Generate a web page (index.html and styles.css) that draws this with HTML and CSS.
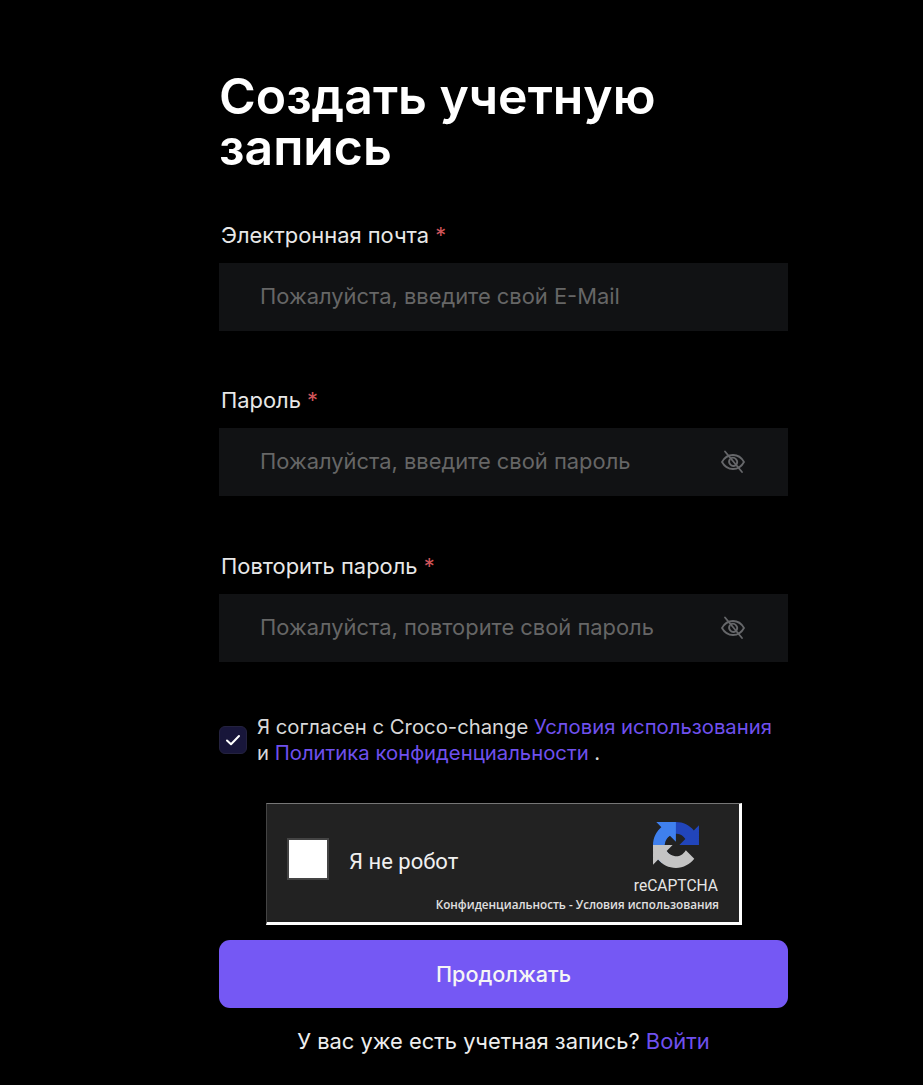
FILE: index.html
```html
<!DOCTYPE html>
<html lang="ru">
<head>
<meta charset="utf-8">
<title>Создать учетную запись</title>
<link rel="stylesheet" href="styles.css">
</head>
<body>
<main class="form">
  <h1 class="title">Создать учетную запись</h1>

  <div class="field field-first">
    <label class="label">Электронная почта <span class="req">*</span></label>
    <div class="input"><span class="placeholder">Пожалуйста, введите свой E-Mail</span></div>
  </div>

  <div class="field">
    <label class="label">Пароль <span class="req">*</span></label>
    <div class="input">
      <span class="placeholder">Пожалуйста, введите свой пароль</span>
      <svg class="eye" viewBox="0 0 24 24" fill="none" stroke="#66676a" stroke-width="1.8" stroke-linecap="round" stroke-linejoin="round"><path d="M1 12C3.500 7.500 7.300 5 12 5S20.500 7.500 23 12C20.500 16.500 16.700 19 12 19S3.500 16.500 1 12Z"/><path d="M8.700 9.500a4.300 4.300 0 0 0 5.800 5.900"/><path d="M9.800 8.300a4.300 4.300 0 0 1 5.800 5.900"/><path d="M4 1.500L21 22"/></svg>
    </div>
  </div>

  <div class="field field-third">
    <label class="label">Повторить пароль <span class="req">*</span></label>
    <div class="input">
      <span class="placeholder">Пожалуйста, повторите свой пароль</span>
      <svg class="eye" viewBox="0 0 24 24" fill="none" stroke="#66676a" stroke-width="1.8" stroke-linecap="round" stroke-linejoin="round"><path d="M1 12C3.500 7.500 7.300 5 12 5S20.500 7.500 23 12C20.500 16.500 16.700 19 12 19S3.500 16.500 1 12Z"/><path d="M8.700 9.500a4.300 4.300 0 0 0 5.800 5.900"/><path d="M9.800 8.300a4.300 4.300 0 0 1 5.800 5.900"/><path d="M4 1.500L21 22"/></svg>
    </div>
  </div>

  <div class="agree">
    <span class="check">
      <svg viewBox="0 0 16 16" width="16" height="16" fill="none" stroke="#fff" stroke-width="2" stroke-linecap="round" stroke-linejoin="round"><path d="M2 8.500L6 12.300L14 4"/></svg>
    </span>
    <p class="agree-text">Я согласен с Croco-change <a class="link">Условия использования</a> и <a class="link">Политика конфиденциальности</a> .</p>
  </div>

  <div class="captcha">
    <div class="captcha-inner">
      <span class="captcha-box"></span>
      <span class="captcha-label">Я не робот</span>
      <div class="captcha-brand">
        <svg class="captcha-logo" viewBox="0 0 64 64">
          <path fill="#2145bb" d="M64 31.955l-.033-1.370V4.687l-7.160 7.160C50.948 4.674 42.033.093 32.050.093c-10.400 0-19.622 4.960-25.458 12.640l11.736 11.860a15.550 15.550 0 0 1 4.754-5.334c2.050-1.600 4.952-2.906 8.968-2.906.485 0 .860.057 1.135.163 4.976.393 9.288 3.140 11.828 7.124l-8.307 8.307L64 31.953"/>
          <path fill="#3f80ee" d="M31.862.094l-1.370.033H4.594l7.160 7.160C4.580 13.147 0 22.060 0 32.046c0 10.400 4.960 19.622 12.640 25.458L24.500 45.768a15.550 15.550 0 0 1-5.334-4.754c-1.600-2.050-2.906-4.952-2.906-8.968 0-.485.057-.860.163-1.135.393-4.976 3.140-9.288 7.124-11.828l8.307 8.307L31.860.094"/>
          <path fill="#c4c4c4" d="M.001 32.045l.033 1.370v25.898l7.160-7.160c5.860 7.173 14.774 11.754 24.760 11.754 10.400 0 19.622-4.960 25.458-12.640l-11.736-11.860a15.550 15.550 0 0 1-4.754 5.334c-2.050 1.600-4.952 2.906-8.968 2.906-.485 0-.860-.057-1.135-.163-4.976-.393-9.288-3.140-11.828-7.124l8.307-8.307L.001 32.045"/>
        </svg>
        <span class="captcha-name">reCAPTCHA</span>
      </div>
      <span class="captcha-links">Конфиденциальность - Условия использования</span>
    </div>
  </div>

  <button class="submit" type="button">Продолжать</button>
  <p class="signin">У вас уже есть учетная запись? <a class="link">Войти</a></p>
</main>
</body>
</html>
```
FILE: styles.css
```css
* { box-sizing: border-box; }
html, body { margin: 0; height: 100%; }
body {
  background: #000;
  color: #f2f2f2;
  font-family: Inter, "Liberation Sans", sans-serif;
  overflow: hidden;
}
.form {
  width: 569px;
  margin-left: 219px;
  padding-top: 71px;
  display: flex;
  flex-direction: column;
}
.title {
  margin: 0;
  font-size: 49.900px;
  line-height: 51px;
  font-weight: 600;
  color: #fff;
}
.field { margin-top: 56px; display: flex; flex-direction: column; }
.field-first { margin-top: 49px; }
.field-third { margin-top: 57px; }
.label {
  padding-left: 2px;
  font-size: 21.900px;
  line-height: 26px;
  color: #e8e8e8;
  margin-bottom: 15px;
}
.req { color: #d0555a; }
.input {
  height: 68px;
  background: #111214;
  padding: 0 43px 2px 41px;
  display: flex;
  align-items: center;
  justify-content: space-between;
}
.placeholder { font-size: 21.900px; color: #666; }
.eye { width: 24px; height: 24px; margin-top: 2px; }
.agree { display: flex; align-items: center; gap: 10px; margin-top: 52px; }
.check {
  width: 28px;
  height: 28px;
  flex: none;
  background: #18163a;
  border: 1px solid #24223f;
  border-radius: 6px;
  display: flex;
  align-items: center;
  justify-content: center;
}
.agree-text { margin: 0; font-size: 20.300px; line-height: 26px; color: #d8d8d8; width: 530px; }
.link { color: #6f50ee; }
.captcha {
  margin: 37px 0 0 47px;
  width: 476px;
  height: 122px;
  background: #222;
  border-style: solid;
  border-width: 1px 3px 3px 1px;
  border-color: #777 #fff #fff #444;
}
.captcha-inner {
  position: relative;
  height: 100%;
  background: #222;
  border-radius: 3px;
  display: flex;
  align-items: center;
  padding: 0 21px 0 20px;
}
.captcha-box {
  width: 42px;
  height: 42px;
  margin-bottom: 8px;
  background: #fff;
  border: 2px solid #444;
  flex: none;
}
.captcha-label { margin: 0 0 4px 20px; font-size: 22px; color: #f0f0f0; font-family: Roboto, sans-serif; }
.captcha-brand {
  margin-left: auto;
  margin-bottom: 10px;
  display: flex;
  flex-direction: column;
  align-items: center;
}
.captcha-logo { width: 48px; height: 46px; }
.captcha-name { font-size: 15.600px; line-height: 18px; margin-top: 9px; color: #e6e6e6; font-family: Roboto, sans-serif; }
.captcha-links {
  position: absolute;
  right: 20px;
  bottom: 10px;
  font-size: 11.650px;
  font-weight: 600;
  color: #e0e0e0;
  font-family: "Open Sans", sans-serif;
}
.submit {
  margin-top: 15px;
  height: 68px;
  border: 0;
  border-radius: 11px;
  background: #7558f4;
  color: #f5f5f5;
  font: 500 21.600px Inter, sans-serif;
}
.signin { margin: 20px 0 0; font-size: 21.900px; line-height: 26px; text-align: center; color: #eee; }
```
